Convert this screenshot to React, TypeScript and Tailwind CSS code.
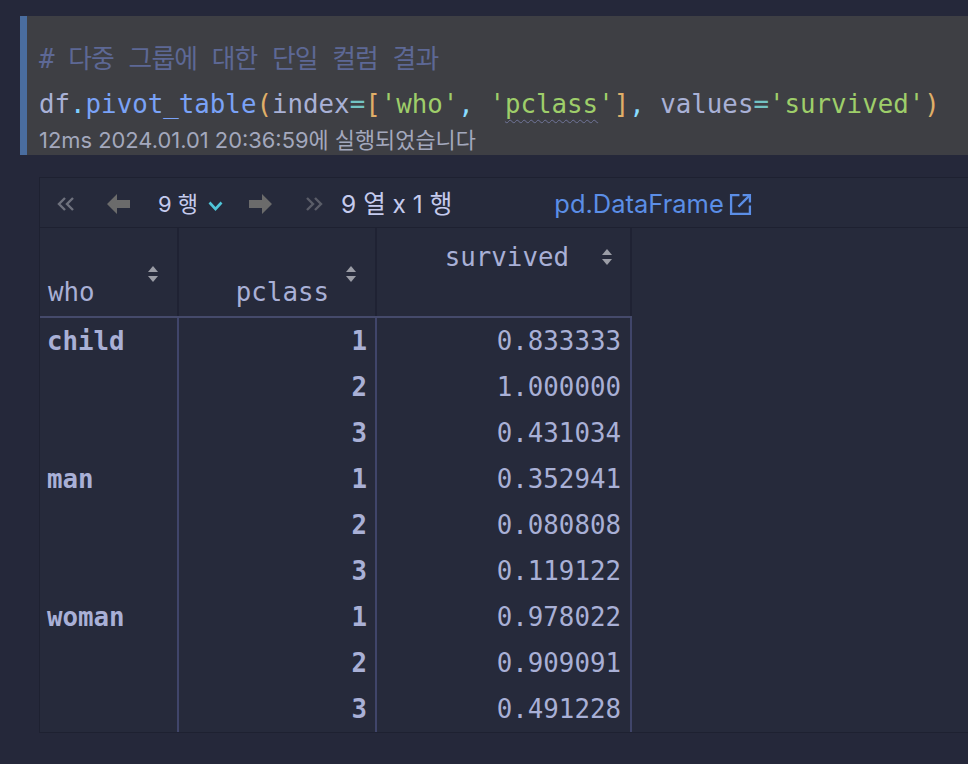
import React from "react";

const mono = "font-['DejaVu_Sans_Mono','Noto_Sans_CJK_KR',monospace]";
const sans = "font-['Inter','Noto_Sans_CJK_KR',sans-serif]";

const rows = [
  { who: "child", p: "1", v: "0.833333" },
  { who: "", p: "2", v: "1.000000" },
  { who: "", p: "3", v: "0.431034" },
  { who: "man", p: "1", v: "0.352941" },
  { who: "", p: "2", v: "0.080808" },
  { who: "", p: "3", v: "0.119122" },
  { who: "woman", p: "1", v: "0.978022" },
  { who: "", p: "2", v: "0.909091" },
  { who: "", p: "3", v: "0.491228" },
];

const SortIcon = () => (
  <svg width="12" height="16" viewBox="0 0 12 16" className="shrink-0">
    <polygon points="6,0 11,6 1,6" fill="#9b9da6" />
    <polygon points="1,10 11,10 6,16" fill="#9b9da6" />
  </svg>
);

const DoubleChevron = ({ dir, color }: { dir: "left" | "right"; color: string }) => (
  <svg width="18" height="16" viewBox="0 0 18 16" fill="none" stroke={color} strokeWidth="2.4">
    {dir === "left" ? (
      <>
        <polyline points="8,2 2,8 8,14" />
        <polyline points="16,2 10,8 16,14" />
      </>
    ) : (
      <>
        <polyline points="2,2 8,8 2,14" />
        <polyline points="10,2 16,8 10,14" />
      </>
    )}
  </svg>
);

const BlockArrow = ({ dir }: { dir: "left" | "right" }) => (
  <svg width="23" height="20" viewBox="0 0 23 20">
    {dir === "left" ? (
      <polygon points="0,10 10,0 10,6 23,6 23,14 10,14 10,20" fill="#6b6b6b" />
    ) : (
      <polygon points="23,10 13,0 13,6 0,6 0,14 13,14 13,20" fill="#6b6b6b" />
    )}
  </svg>
);

const ExternalIcon = () => (
  <svg width="23" height="23" viewBox="0 0 22 22" fill="none" stroke="#5b8ee6" strokeWidth="2.2">
    <path d="M10 2 H2 V20 H20 V12" />
    <path d="M13 2 H20 V9" />
    <path d="M20 2 L9 13" />
  </svg>
);

export default function App() {
  return (
    <div className="min-h-[764px] w-full overflow-hidden bg-[#25283a] pt-[16px]">
      {/* code cell */}
      <div className="ml-[20px] flex bg-[#3e3f44]">
        <div className="w-[7px] shrink-0 bg-[#4a6d9f]" />
        <div className="pl-[12px] pt-[21px]">
          <div className={`${mono} flex h-[44px] items-center text-[25.8px] tracking-[-0.9px] text-[#5d6895] whitespace-pre`}>
            # 다중 그룹에 대한 단일 컬럼 결과
          </div>
          <div className={`${mono} flex h-[46px] items-center text-[25.8px] text-[#a9b1d6] whitespace-pre`}>
            <span>df</span>
            <span className="text-[#7dcfff]">.</span>
            <span className="text-[#7aa2f7]">pivot_table</span>
            <span className="text-[#e0af68]">(</span>
            <span>index</span>
            <span className="text-[#73c3c3]">=</span>
            <span className="text-[#e0af68]">[</span>
            <span className="text-[#9ece6a]">'who'</span>
            <span className="text-[#89ddff]">, </span>
            <span className="text-[#9ece6a]">
              '<span className="underline decoration-wavy decoration-[#6f7499] decoration-1 underline-offset-[6px]">pclass</span>'
            </span>
            <span className="text-[#e0af68]">]</span>
            <span className="text-[#89ddff]">, </span>
            <span>values</span>
            <span className="text-[#73c3c3]">=</span>
            <span className="text-[#9ece6a]">'survived'</span>
            <span className="text-[#e0af68]">)</span>
          </div>
          <div className={`${sans} flex h-[28px] items-start text-[21.9px] leading-[26px] text-[#a3a8bd]`}>
            12ms 2024.01.01 20:36:59에 실행되었습니다
          </div>
        </div>
      </div>

      {/* result frame */}
      <div className="ml-[39px] mt-[22px] border border-r-0 border-[#1e2131] bg-[#262a3b]">
        {/* toolbar */}
        <div className="flex h-[50px] items-center border-b border-[#1e2131] pl-[17px] pt-[3px]">
          <DoubleChevron dir="left" color="#6e717d" />
          <div className="ml-[32px]">
            <BlockArrow dir="left" />
          </div>
          <span className={`${sans} ml-[28px] text-[22px] text-[#c5cbee]`}>9 행</span>
          <svg width="15" height="10" viewBox="0 0 15 10" fill="none" stroke="#4fc5d8" strokeWidth="2.6" className="ml-[10px] mt-[4px]">
            <polyline points="1.5,1.5 7.5,8 13.5,1.5" />
          </svg>
          <div className="ml-[26px]">
            <BlockArrow dir="right" />
          </div>
          <div className="ml-[33px]">
            <DoubleChevron dir="right" color="#5a5d68" />
          </div>
          <span className={`${sans} ml-[18px] text-[24.5px] text-[#c5cbee]`}>9 열 x 1 행</span>
          <span className={`${sans} ml-[102px] text-[25.5px] text-[#5b8ee6]`}>pd.DataFrame</span>
          <div className="ml-[5px]">
            <ExternalIcon />
          </div>
        </div>

        {/* table */}
        <div className={`${mono} w-[592px] text-[25.8px] text-[#a9b0d6]`}>
          {/* header */}
          <div className="grid h-[90px] grid-cols-[139px_198px_255px] border-b-2 border-[#454a6b]">
            <div className="flex justify-between border-r-2 border-[#1f2233] pl-[8px] pr-[18px]">
              <span className="self-end pb-[9px] leading-[30px]">who</span>
              <div className="mt-[38px] self-start">
                <SortIcon />
              </div>
            </div>
            <div className="flex justify-end border-r-2 border-[#1f2233] pr-[18px]">
              <span className="mr-[16px] self-end pb-[9px] leading-[30px]">pclass</span>
              <div className="mt-[38px] self-start">
                <SortIcon />
              </div>
            </div>
            <div className="flex items-start justify-end border-r-2 border-[#1f2233] pr-[17px] pt-[14px]">
              <span className="leading-[30px]">survived</span>
              <div className="ml-[32px] mt-[7px]">
                <SortIcon />
              </div>
            </div>
          </div>
          {/* body */}
          {rows.map((r, i) => (
            <div key={i} className="grid h-[46px] grid-cols-[139px_198px_255px] items-center">
              <div className="flex h-full items-center border-r-2 border-[#40456a] pl-[7px] font-bold">
                {r.who}
              </div>
              <div className="flex h-full items-center justify-end border-r-2 border-[#40456a] pr-[8px] font-bold">
                {r.p}
              </div>
              <div className="flex h-full items-center justify-end border-r-2 border-[#40456a] pr-[9px]">
                {r.v}
              </div>
            </div>
          ))}
        </div>
      </div>
    </div>
  );
}
